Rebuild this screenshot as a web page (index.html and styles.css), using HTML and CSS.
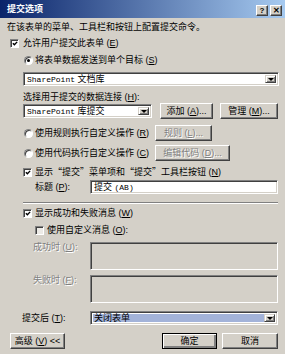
FILE: index.html
```html
<!DOCTYPE html>
<html lang="zh-CN">
<head>
    <meta charset="UTF-8">
    <title>提交选项</title>
    <link rel="stylesheet" href="styles.css">
</head>
<body>
    <div class="dialog">
        <div class="titlebar">
            <span class="title">提交选项</span>
            <span class="tb-btns">
                <span class="tb-btn">?</span>
                <span class="tb-btn">✕</span>
            </span>
        </div>

        <div class="body">
            <p class="desc">在该表单的菜单、工具栏和按钮上配置提交命令。</p>

            <div class="row r-allow">
                <span class="check top-check"><svg viewBox="0 0 7 7"><path d="M1 3.2 L2.8 5 L6 1.6"/></svg></span>
                <span>允许用户提交此表单 (<u>E</u>)</span>
            </div>

            <div class="row indent r-single">
                <span class="radio on"></span>
                <span>将表单数据发送到单个目标 (<u>S</u>)</span>
            </div>

            <div class="field select indent r-lib">
                <span class="value"><span class="mono">SharePoint</span> 文档库</span>
                <span class="drop"></span>
            </div>

            <div class="row indent r-label">选择用于提交的数据连接 (<u>H</u>):</div>

            <div class="row indent r-conn">
                <div class="field select conn">
                    <span class="value"><span class="mono">SharePoint</span> 库提交</span>
                    <span class="drop"></span>
                </div>
                <span class="btn add">添加 (<u>A</u>)...</span>
                <span class="btn manage">管理 (<u>M</u>)...</span>
            </div>

            <div class="row indent r-rule">
                <span class="radio"></span>
                <span class="opt-label">使用规则执行自定义操作 (<u>R</u>)</span>
                <span class="btn disabled rule">规则 (<u>L</u>)...</span>
            </div>

            <div class="row indent r-code">
                <span class="radio"></span>
                <span class="opt-label">使用代码执行自定义操作 (<u>C</u>)</span>
                <span class="btn disabled code">编辑代码 (<u>D</u>)...</span>
            </div>

            <div class="row indent r-menu">
                <span class="check"><svg viewBox="0 0 7 7"><path d="M1 3.2 L2.8 5 L6 1.6"/></svg></span>
                <span>显示<span class="cjk">“提交”</span>菜单项和<span class="cjk">“提交”</span>工具栏按钮 (<u>N</u>)</span>
            </div>

            <div class="field-row r-caption">
                <span class="lbl lbl-caption">标题 (<u>P</u>):</span>
                <div class="field input"><span class="value">提交 <span class="mono">(AB)</span></span></div>
            </div>

            <div class="separator"></div>

            <div class="row indent r-msg">
                <span class="check"><svg viewBox="0 0 7 7"><path d="M1 3.2 L2.8 5 L6 1.6"/></svg></span>
                <span>显示成功和失败消息 (<u>W</u>)</span>
            </div>

            <div class="row r-custom">
                <span class="check off"></span>
                <span>使用自定义消息 (<u>O</u>):</span>
            </div>

            <div class="field-row area-row r-ok">
                <span class="lbl lbl-msg disabled-text">成功时 (<u>U</u>):</span>
                <div class="field area"></div>
            </div>

            <div class="field-row area-row r-fail">
                <span class="lbl lbl-msg disabled-text">失败时 (<u>F</u>):</span>
                <div class="field area"></div>
            </div>

            <div class="field-row r-after">
                <span class="lbl lbl-after">提交后 (<u>T</u>):</span>
                <div class="field select after">
                    <span class="value picked">关闭表单</span>
                    <span class="drop"></span>
                </div>
            </div>

            <div class="footer">
                <span class="btn advanced">高级 (<u>V</u>) &lt;&lt;</span>
                <span class="spacer"></span>
                <span class="btn default ok">确定</span>
                <span class="btn cancel">取消</span>
            </div>
        </div>
    </div>
</body>
</html>
```

FILE: styles.css
```css
* {
    box-sizing: border-box;
}
body {
    margin: 0;
    background: #d4d0c8;
    font-family: "Liberation Sans", "Noto Sans CJK SC", sans-serif;
    font-size: 9px;
    color: #000;
}
u {
    text-decoration: underline;
}
.cjk {
    font-family: "Noto Sans CJK SC", sans-serif;
}
.dialog {
    width: 286px;
    height: 354px;
    background: #d4d0c8;
    border-right: 1px solid #fff;
    overflow: hidden;
}
.titlebar {
    height: 18px;
    background: linear-gradient(to right, #0a246a, #a6caf0);
    display: flex;
    align-items: center;
    justify-content: space-between;
    padding: 0 3px 0 7px;
}
.title {
    color: #fff;
    font-weight: bold;
    line-height: 12px;
}
.tb-btns {
    display: flex;
    gap: 2px;
    margin-top: 2px;
}
.tb-btn {
    width: 12px;
    height: 11px;
    background: #d4d0c8;
    border: 1px solid;
    border-color: #fff #404040 #404040 #fff;
    box-shadow: inset -1px -1px #808080;
    font-size: 8px;
    font-weight: bold;
    line-height: 9px;
    text-align: center;
    font-family: "Liberation Sans", sans-serif;
}
.body {
    padding: 0 7px;
}
.desc {
    margin: 3px 0 0;
    height: 12px;
    line-height: 12px;
}
.row {
    display: flex;
    align-items: center;
    height: 12px;
    line-height: 12px;
    white-space: nowrap;
}
.indent {
    margin-left: 16px;
}

/* vertical rhythm */
.r-allow { margin-top: 4px; }
.r-single { margin-top: 5px; }
.r-lib { margin-top: 6px; }
.r-label { margin-top: 5px; }
.r-conn { height: 16px; margin-top: 0; }
.r-rule { height: 16px; margin-top: 6px; }
.r-code { height: 16px; margin-top: 4px; }
.r-menu { margin-top: 5px; }
.r-caption { margin-top: 2px; }
.r-msg { margin-top: 3px; }
.r-custom { margin-top: 5px; margin-left: 28px; }
.r-ok { margin-top: 6px; }
.r-fail { margin-top: 5px; }
.r-after { margin-top: 8px; }

/* checkboxes and radios */
.check {
    width: 9px;
    height: 9px;
    background: #fff;
    border: 1px solid;
    border-color: #808080 #fff #fff #808080;
    box-shadow: inset 1px 1px #404040;
    margin-right: 3px;
    display: flex;
    align-items: center;
    justify-content: center;
    flex: none;
}
.check svg {
    width: 7px;
    height: 7px;
    margin: 1px 0 0 1px;
}
.check path {
    fill: none;
    stroke: #000;
    stroke-width: 1.6;
}
.check.off {
    background: #eceae6;
}
.top-check {
    margin-left: 3px;
    margin-right: 4px;
}
.radio {
    width: 9px;
    height: 9px;
    border-radius: 50%;
    background: #fff;
    border: 1px solid;
    border-color: #808080 #fff #fff #808080;
    box-shadow: inset 1px 1px #404040;
    margin: 0 2px 0 1px;
    position: relative;
    flex: none;
}
.radio.on::after {
    content: "";
    position: absolute;
    left: 2px;
    top: 2px;
    width: 3px;
    height: 3px;
    border-radius: 50%;
    background: #000;
}
.opt-label {
    width: 120px;
}

/* sunken fields */
.field {
    background: #fff;
    border: 1px solid;
    border-color: #808080 #fff #fff #808080;
    box-shadow: inset 1px 1px #404040, inset -1px -1px #d4d0c8;
    display: flex;
    align-items: stretch;
    padding: 1px 2px;
}
.field .value {
    flex: 1;
    line-height: 10px;
    padding-left: 1px;
    white-space: nowrap;
}
.mono {
    font-family: "Liberation Mono", monospace;
    font-size: 8px;
}
.select {
    height: 14px;
}
.r-lib {
    width: 256px;
}
.conn {
    width: 130px;
}
.drop {
    width: 11px;
    margin: 1px 0;
    background: #d4d0c8;
    border: 1px solid;
    border-color: #d4d0c8 #404040 #404040 #d4d0c8;
    box-shadow: inset 1px 1px #fff, inset -1px -1px #808080;
    position: relative;
    flex: none;
}
.drop::after {
    content: "";
    position: absolute;
    left: 2px;
    top: 2px;
    border-left: 3px solid transparent;
    border-right: 3px solid transparent;
    border-top: 3px solid #000;
}

.field-row {
    display: flex;
    align-items: center;
}
.lbl {
    width: 83px;
    line-height: 12px;
    white-space: nowrap;
    flex: none;
}
.lbl-caption {
    padding-left: 28px;
}
.lbl-msg {
    padding-left: 26px;
}
.lbl-after {
    padding-left: 15px;
}
.input {
    width: 189px;
    height: 14px;
}
.area-row {
    align-items: flex-start;
}
.area-row .lbl {
    line-height: 10px;
}
.area {
    width: 189px;
    height: 28px;
    background: #d4d0c8;
}
.after {
    width: 189px;
}
.picked {
    background: #a3b3d9;
    margin: 1px 0;
    line-height: 8px;
}
.field .picked {
    line-height: 8px;
}
.disabled-text {
    color: #808080;
    text-shadow: 1px 1px #fff;
}

.separator {
    margin: 8px 0 0 16px;
    border-top: 1px solid #808080;
    border-bottom: 1px solid #fff;
}

/* buttons */
.btn {
    height: 16px;
    background: #d4d0c8;
    border: 1px solid;
    border-color: #fff #404040 #404040 #fff;
    box-shadow: inset -1px -1px #808080;
    display: flex;
    align-items: center;
    justify-content: center;
    line-height: 12px;
    white-space: nowrap;
    flex: none;
}
.btn.disabled {
    color: #808080;
    text-shadow: 1px 1px #fff;
}
.btn.default {
    border-color: #000;
    box-shadow: inset 1px 1px #fff, inset -2px -2px #808080;
}
.add {
    width: 53px;
    margin-left: 8px;
}
.manage {
    width: 58px;
    margin-left: 7px;
}
.rule {
    width: 57px;
}
.code {
    width: 75px;
}
.footer {
    display: flex;
    margin-top: 8px;
}
.spacer {
    flex: 1;
}
.advanced {
    width: 55px;
    margin-left: 3px;
}
.ok {
    width: 55px;
    margin-right: 5px;
}
.cancel {
    width: 56px;
}
```
